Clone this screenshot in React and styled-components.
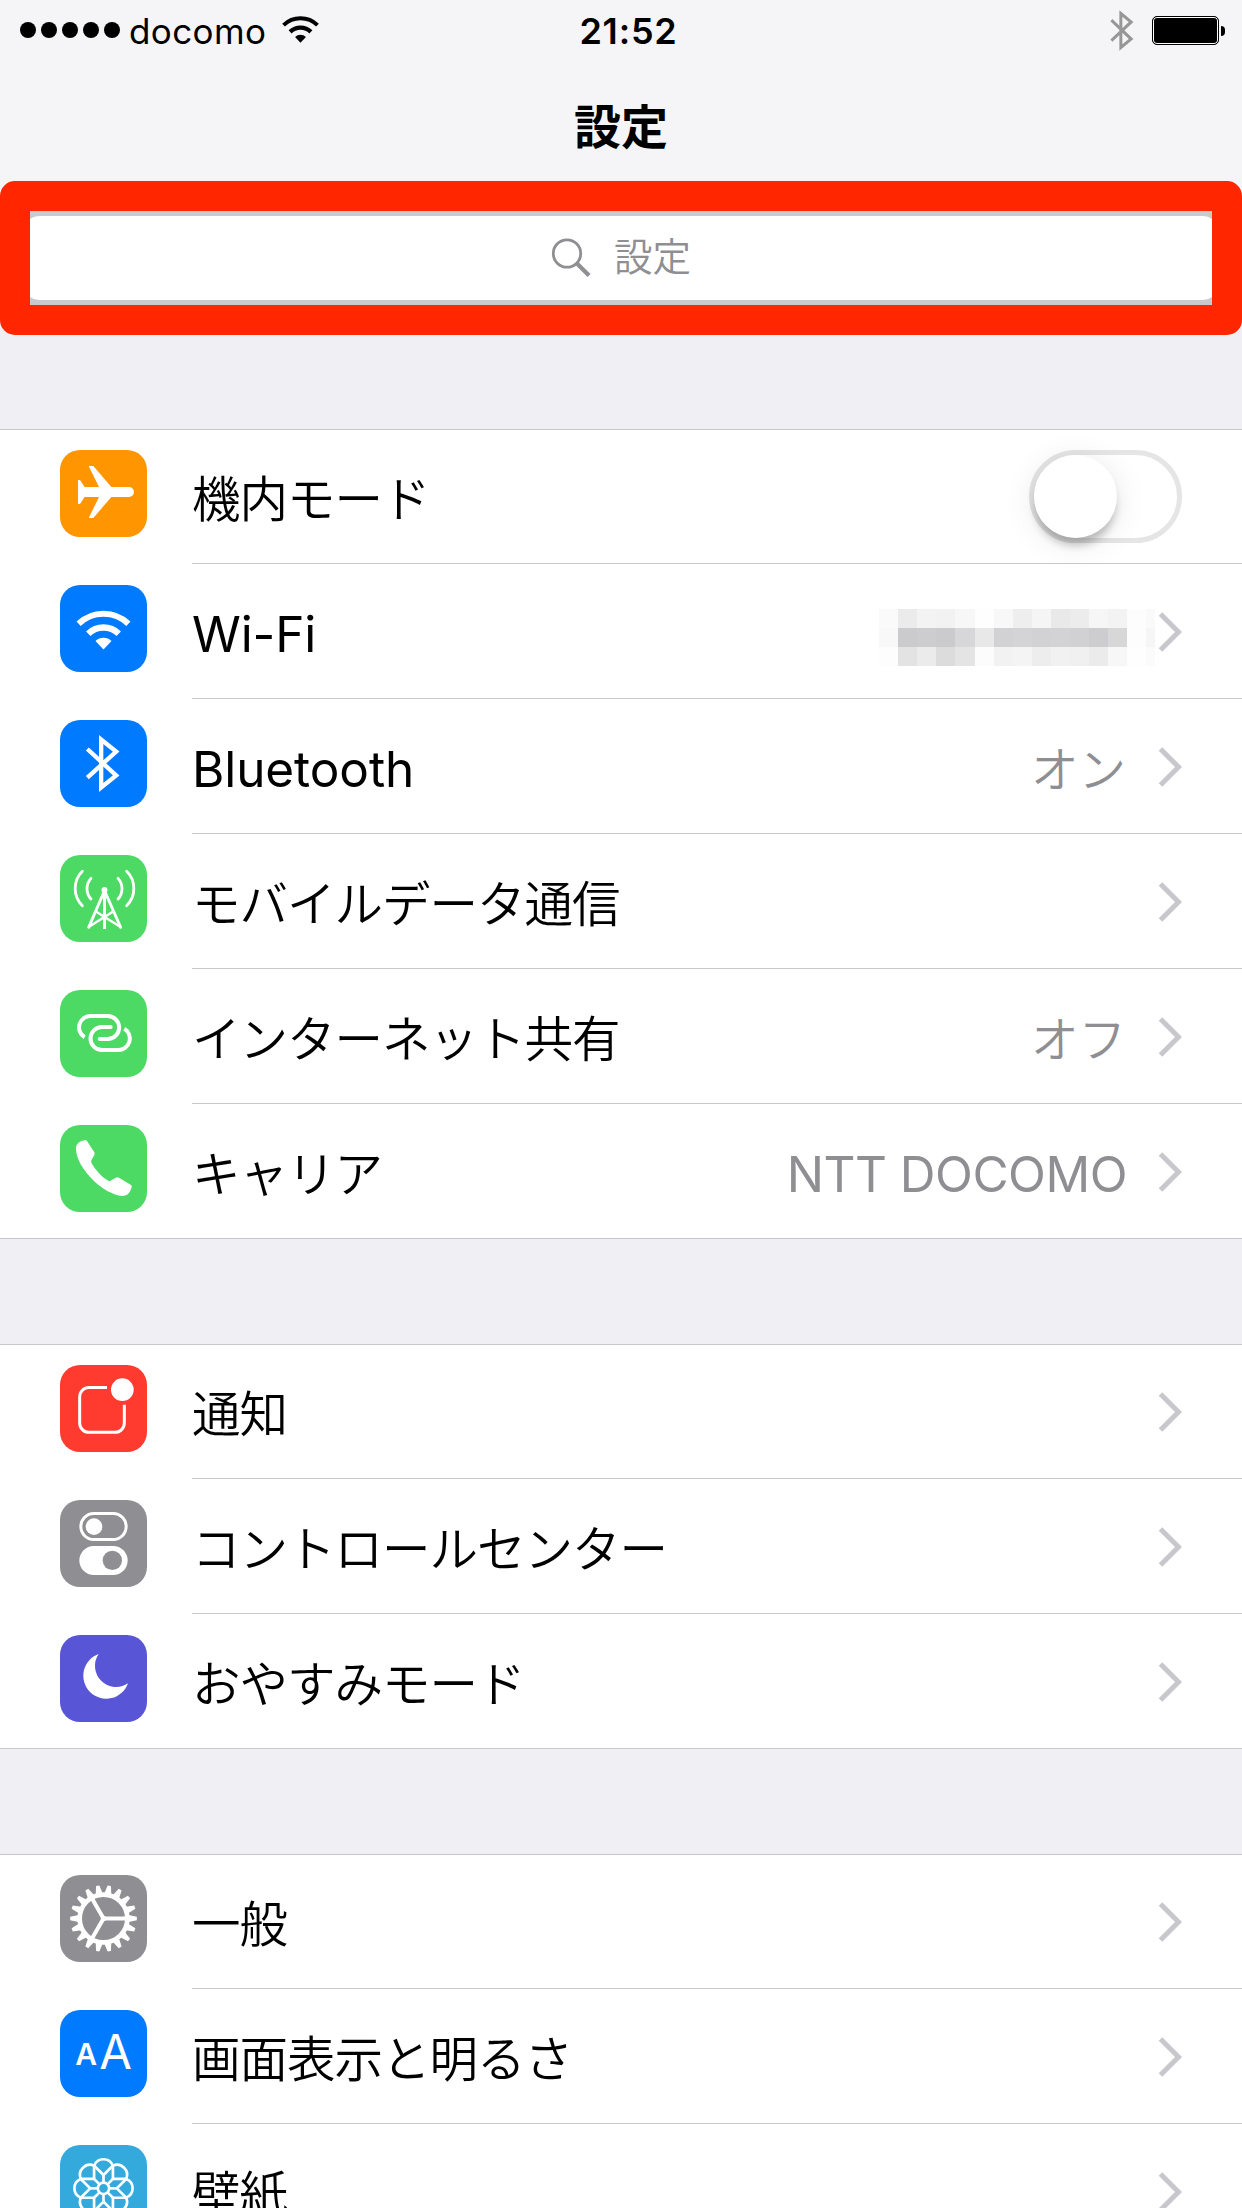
import React from 'react';
import styled, { createGlobalStyle } from 'styled-components';

const WifiGlyph = () => (
    <>
        <path d="M55.8 116.2A107.5 107.5 0 0 1 205.2 116.2" fill="none" stroke="currentColor" strokeWidth="18" />
        <path d="M84.7 146A66 66 0 0 1 176.3 146" fill="none" stroke="currentColor" strokeWidth="19" />
        <path d="M130.5 193.5L106.5 168A35 35 0 0 1 154.5 168Z" fill="currentColor" />
    </>
)

const BluetoothGlyph = () => (
    <path
        d="M82 87L168.5 166.5L123.5 202.5V58.5L168.5 94.5L82 173"
        fill="none"
        stroke="currentColor"
        strokeWidth="13"
    />
)

const AirplaneGlyph = () => (
    <path
        d="M54 90H60L74 111H117L86 48H100L154 111H207A15 15 0 0 1 207 141H154L100 204H86L117 141H74L60 162H54Z"
        fill="currentColor"
    />
)

const TowerGlyph = () => (
    <g fill="none" stroke="currentColor" strokeWidth="8.500" strokeLinecap="round">
        <path d="M67 49A72.5 72.5 0 0 0 67 152" />
        <path d="M93 70A46 46 0 0 0 93 132" />
        <path d="M174 70A46 46 0 0 1 174 132" />
        <path d="M200 49A72.5 72.5 0 0 1 200 152" />
        <path d="M133.5 107L86 217M133.5 107L182 217" />
        <path d="M133.5 105V222" strokeLinecap="butt" strokeWidth="9" />
        <path d="M86 216L133.5 186L182 216M109 170L133.5 186L158 170" strokeWidth="7" strokeLinecap="butt" />
        <circle cx="133.5" cy="105" r="9" fill="currentColor" stroke="none" />
    </g>
)

const LinkGlyph = () => (
    <g fill="none" stroke="currentColor" strokeWidth="12">
        <path d="M74 142A34.5 34.5 0 0 1 94.5 78H143A34.5 34.5 0 0 1 143 147H117" />
        <path d="M152 111H126A34.5 34.5 0 0 0 126 180H174A34.5 34.5 0 0 0 193 116" />
        <circle cx="152" cy="111" r="6" fill="currentColor" stroke="none" />
        <circle cx="119" cy="147" r="6" fill="currentColor" stroke="none" />
    </g>
)

const PhoneGlyph = () => (
    <path
        d="M48 73C47 58 58 47 76 45Q79 45 81 48L103 82Q105 86 103 90L94 106Q92 110 96 117C108 137 124 154 141 165Q147 169 152 167L167 158Q172 155 177 158L212 179Q217 182 215 187C210 204 202 213 188 213C130 210 50 130 48 73Z"
        fill="currentColor"
    />
)

const NoticeGlyph = () => (
    <>
        <path
            d="M141 67.500H87A28 28 0 0 0 59 95.500V174A28 28 0 0 0 87 202H165A28 28 0 0 0 193 174V119"
            fill="none"
            stroke="currentColor"
            strokeWidth="9"
        />
        <circle cx="187" cy="74" r="34" fill="currentColor" />
    </>
)

const ControlGlyph = () => (
    <>
        <rect x="62.500" y="40.500" width="136" height="78" rx="39" fill="none" stroke="currentColor" strokeWidth="9" />
        <circle cx="102" cy="80" r="25" fill="currentColor" />
        <rect x="58" y="138" width="145" height="87" rx="43.500" fill="currentColor" />
        <circle cx="157" cy="181" r="29" fill="#8e8e93" />
    </>
)

const MoonGlyph = () => (
    <path d="M116 57A69 69 0 1 0 204 145A63.300 63.300 0 0 1 116 57Z" fill="currentColor" />
)

const teeth = Array.from({ length: 18 }, (_, i) => i * 20);

const GearGlyph = () => (
    <g transform="translate(130.500 130.500)" fill="currentColor">
        <circle r="71.500" fill="none" stroke="currentColor" strokeWidth="14" />
        {teeth.map(angle => (
            <path key={angle} d="M75 -10.500L100 -5V5L75 10.500Z" transform={`rotate(${angle})`} />
        ))}
        {[0, 120, 240].map(angle => (
            <path key={angle} d="M0 -6H68V6H0Z" transform={`rotate(${angle})`} />
        ))}
        <circle r="8" />
    </g>
)

const TextSizeGlyph = () => (
    <g fill="currentColor" fontFamily="Inter, sans-serif">
        <text x="46" y="164" fontSize="90" fontWeight="600">A</text>
        <text x="118" y="177" fontSize="142" fontWeight="400">A</text>
    </g>
)

const FlowerGlyph = () => (
    <g transform="translate(130.500 130)" fill="none" stroke="currentColor" strokeWidth="8">
        {[0, 45, 90, 135, 180, 225, 270, 315].map(angle => (
            <g key={angle} transform={`rotate(${angle})`}>
                <path d="M-28 -68A30 30 0 0 1 28 -68L0 -40Z" />
                <path d="M0 -40V-18" />
            </g>
        ))}
        <circle r="17" />
    </g>
)

const groups = [
    [
        { label: '機内モード', color: '#ff9500', Glyph: AirplaneGlyph, toggle: true },
        { label: 'Wi-Fi', latin: true, color: '#007aff', Glyph: WifiGlyph, masked: true },
        { label: 'Bluetooth', latin: true, color: '#007aff', Glyph: BluetoothGlyph, value: 'オン' },
        { label: 'モバイルデータ通信', color: '#4cd964', Glyph: TowerGlyph },
        { label: 'インターネット共有', color: '#4cd964', Glyph: LinkGlyph, value: 'オフ' },
        { label: 'キャリア', color: '#4cd964', Glyph: PhoneGlyph, value: 'NTT DOCOMO', latinValue: true }
    ],
    [
        { label: '通知', color: '#ff3b30', Glyph: NoticeGlyph },
        { label: 'コントロールセンター', color: '#8e8e93', Glyph: ControlGlyph },
        { label: 'おやすみモード', color: '#5856d6', Glyph: MoonGlyph }
    ],
    [
        { label: '一般', color: '#8e8e93', Glyph: GearGlyph },
        { label: '画面表示と明るさ', color: '#007aff', Glyph: TextSizeGlyph },
        { label: '壁紙', color: '#34aadc', Glyph: FlowerGlyph }
    ]
];

// pixelated network name, one colour per block
const mosaic = [
    'fafafa ebebec f3f3f4 f2f2f3 f7f7f8 fefefe f8f8f9 eeeeef f5f5f5 e9e9e9 ececed f6f6f7 f3f3f3 fdfdfd fafafa',
    'f8f8f8 cbcbcd cdcdcf cbcbce d7d7d9 e8e8e8 d2d2d4 d4d4d6 d2d2d4 d3d3d5 d1d1d3 cdcdcf d7d7d7 fdfdfd f6f6f6',
    'fdfdfd e3e3e4 ebebec dcdcdd e4e4e5 fcfcfc f2f2f2 f4f4f4 ededed f1f1f2 f0f0f1 ebebec f7f7f7 fefefe fbfbfb'
].join(' ').split(' ');

function SettingRow({ label, latin, color, Glyph, toggle, masked, value, latinValue }) {
    return (
        <Row>
            <Tile $color={color}>
                <svg width="87" height="87" viewBox="0 0 261 261">
                    <Glyph />
                </svg>
            </Tile>
            <RowBody>
                <Label $latin={latin}>{label}</Label>
                {value && <Value $latin={latinValue}>{value}</Value>}
                {masked && (
                    <Mosaic>
                        {mosaic.map((shade, index) => <Block key={index} $shade={shade} />)}
                    </Mosaic>
                )}
                {toggle ? (
                    <Toggle>
                        <Knob />
                    </Toggle>
                ) : (
                    <Chevron width="24" height="42" viewBox="0 0 24 42">
                        <path d="M2.500 3L20.500 21L2.500 39" fill="none" stroke="#c7c7cc" strokeWidth="5" />
                    </Chevron>
                )}
            </RowBody>
        </Row>
    )
}

export default function App() {
    return (
        <Screen>
            <GlobalStyle />
            <StatusBar>
                <Carrier>
                    <Signal>
                        {[0, 1, 2, 3, 4].map(dot => <Dot key={dot} />)}
                    </Signal>
                    <CarrierName>docomo</CarrierName>
                    <svg width="37" height="27" viewBox="49 77 163 117">
                        <WifiGlyph />
                    </svg>
                </Carrier>
                <Clock>21:52</Clock>
                <Indicators>
                    <BluetoothMark width="24" height="41" viewBox="76 44 105 173" preserveAspectRatio="none">
                        <BluetoothGlyph />
                    </BluetoothMark>
                    <Battery />
                    <BatteryCap />
                </Indicators>
            </StatusBar>
            <Title>設定</Title>
            <SearchBar>
                <SearchField>
                    <svg width="40" height="40" viewBox="0 0 40 40">
                        <circle cx="16" cy="15.500" r="13.700" fill="none" stroke="#8e8e93" strokeWidth="2.800" />
                        <path d="M25.700 25.200L38 37.500" stroke="#8e8e93" strokeWidth="4.200" />
                    </svg>
                    <Placeholder>設定</Placeholder>
                </SearchField>
            </SearchBar>
            {groups.map((rows, index) => (
                <Group key={index}>
                    {rows.map(row => <SettingRow key={row.label} {...row} />)}
                </Group>
            ))}
        </Screen>
    )
}

const GlobalStyle = createGlobalStyle`
    body {
        margin: 0;
        background: #efeff4;
    }
    * {
        box-sizing: border-box;
    }
    svg {
        display: block;
        flex: none;
    }
`

const Screen = styled.div`
    width: 1242px;
    height: 2208px;
    overflow: hidden;
    background: linear-gradient(#f5f5f7 260px, #efeff4 260px);
    color: #000;
    font-family: Inter, "Noto Sans CJK JP", sans-serif;
`

const StatusBar = styled.header`
    display: grid;
    grid-template-columns: 1fr auto 1fr;
    height: 60px;
    padding: 0 17px 0 20px;
`

const Carrier = styled.div`
    display: flex;
    align-items: center;
    height: 60px;
    svg {
        margin: 0 0 1px 16px;
    }
`

const Signal = styled.div`
    display: flex;
    gap: 5px;
`

const Dot = styled.span`
    width: 16px;
    height: 16px;
    border-radius: 50%;
    background: #000;
`

const CarrierName = styled.span`
    margin: 1px 0 0 9px;
    font-size: 35px;
    letter-spacing: 0.4px;
`

const Clock = styled.span`
    margin: 1px 0 0 12px;
    font-size: 36px;
    font-weight: 600;
    line-height: 60px;
    letter-spacing: 0.8px;
`

const Indicators = styled.div`
    display: flex;
    align-items: center;
    justify-content: flex-end;
    height: 61px;
`

const BluetoothMark = styled.svg`
    margin-right: 18px;
    color: #979797;
`

const Battery = styled.span`
    width: 67px;
    height: 29px;
    border: 1px solid #000;
    border-radius: 5px;
    background: #000;
    box-shadow: inset 0 0 0 1px #fff;
`

const BatteryCap = styled.span`
    width: 4px;
    height: 10px;
    margin-left: 2px;
    border-radius: 0 4px 4px 0;
    background: #000;
`

const Title = styled.h1`
    height: 121px;
    margin: 0;
    padding-top: 29px;
    font-family: "Noto Sans CJK JP", sans-serif;
    font-size: 47px;
    font-weight: 700;
    line-height: 70px;
    text-align: center;
`

const SearchBar = styled.div`
    height: 154px;
    margin-bottom: 94px;
    padding: 5px 0;
    overflow: hidden;
    border: 30px solid #ff2600;
    border-radius: 15px;
    background: #c9c9ce;
`

const SearchField = styled.div`
    display: flex;
    align-items: center;
    justify-content: center;
    gap: 23px;
    height: 84px;
    margin: 0 -6px;
    border-radius: 15px;
    background: #fff;
`

const Placeholder = styled.span`
    height: 84px;
    font-family: "Noto Sans CJK JP", sans-serif;
    font-size: 38.5px;
    font-weight: 350;
    line-height: 76px;
    color: #8e8e93;
`

const Group = styled.section`
    margin-bottom: 105px;
    background: #fff;
    box-shadow: inset 0 1px #c8c7cc, inset 0 -1px #c8c7cc;
`

const RowBody = styled.div`
    display: flex;
    flex: 1;
    align-items: center;
    height: 135px;
    padding-right: 60px;
    border-bottom: 1px solid #c8c7cc;
`

const Row = styled.div`
    display: flex;
    height: 135px;
    padding-left: 60px;
    &:last-child ${RowBody} {
        border-bottom-color: transparent;
    }
`

const Tile = styled.div`
    width: 87px;
    height: 87px;
    margin: 21px 45px 0 0;
    border-radius: 20px;
    background: ${props => props.$color};
    color: #fff;
`

const Label = styled.span`
    flex: 1;
    padding: ${props => props.$latin ? '6px 0 0' : '0 0 1px'};
    font-family: ${props => props.$latin ? 'Inter' : '"Noto Sans CJK JP"'}, sans-serif;
    font-size: ${props => props.$latin ? '49.5px' : '48.5px'};
    font-weight: ${props => props.$latin ? 400 : 350};
    letter-spacing: ${props => props.$latin ? '-0.1px' : '-1px'};
    white-space: nowrap;
`

const Value = styled.span`
    margin-right: ${props => props.$latin ? '31px' : '32px'};
    padding-top: ${props => props.$latin ? '6px' : '0'};
    font-family: ${props => props.$latin ? 'Inter' : '"Noto Sans CJK JP"'}, sans-serif;
    font-size: ${props => props.$latin ? '49.5px' : '47.5px'};
    font-weight: ${props => props.$latin ? 400 : 350};
    letter-spacing: ${props => props.$latin ? '-0.5px' : '0'};
    color: #8e8e93;
`

const Mosaic = styled.div`
    display: grid;
    grid-template-columns: repeat(14, 19.1px) 8.600px;
    grid-auto-rows: 19px;
    margin: 13px 3px 0 0;
`

const Block = styled.span`
    background: #${props => props.$shade};
`

const Chevron = styled.svg`
    margin-top: 1px;
`

const Toggle = styled.div`
    width: 153px;
    height: 93px;
    margin-top: 1px;
    border: 5px solid #e5e5e5;
    border-radius: 47px;
`

const Knob = styled.div`
    width: 83px;
    height: 83px;
    border-radius: 50%;
    background: #fff;
    box-shadow: 0 9px 9px -2px rgba(0, 0, 0, 0.24), 0 5px 32px rgba(0, 0, 0, 0.1);
`
